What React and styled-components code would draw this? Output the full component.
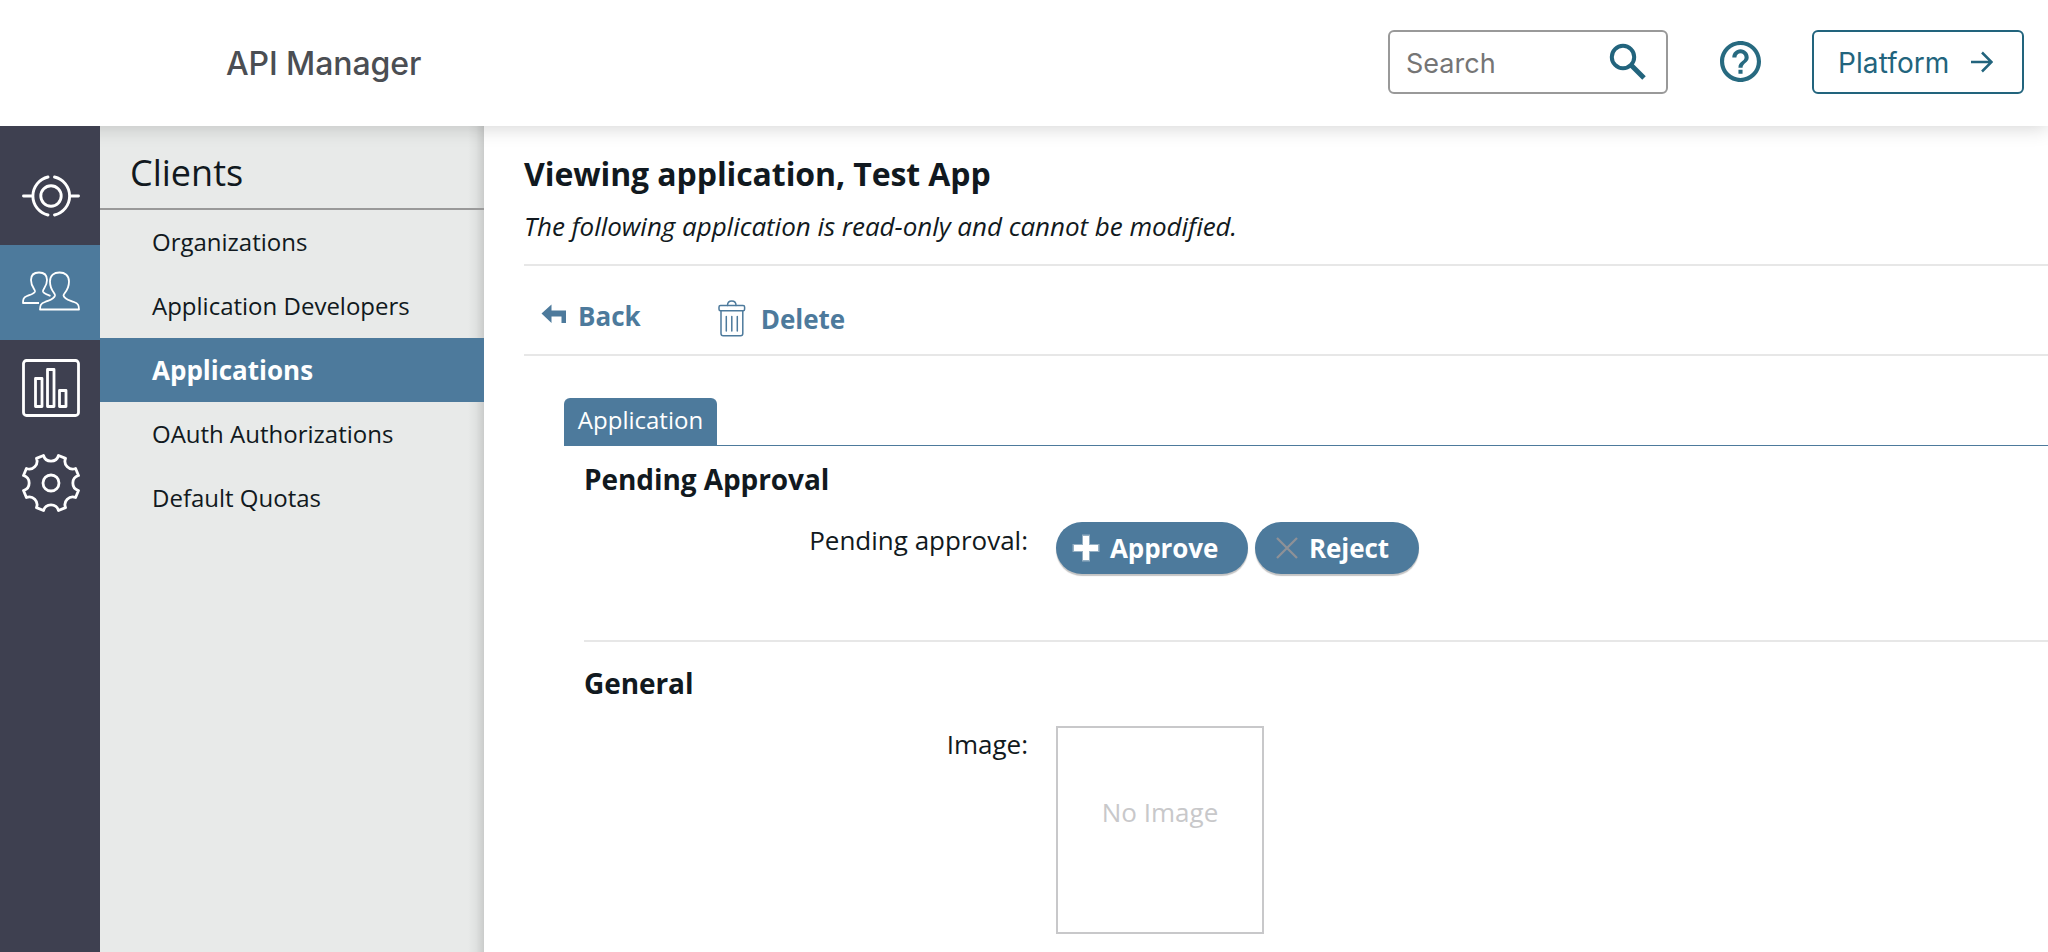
import React from 'react';
import styled, { createGlobalStyle } from 'styled-components';

const GlobalStyle = createGlobalStyle`
  * { box-sizing: border-box; }
  body {
    margin: 0;
    overflow: hidden;
    background: #fff;
    color: #111920;
    font-family: 'Open Sans', 'Noto Sans', sans-serif;
    font-size: 26px;
  }
`;

const Page = styled.div`
  display: flex;
  flex-direction: column;
  width: 100%;
  height: 952px;
  overflow: hidden;
`;

const Header = styled.header`
  position: relative;
  z-index: 1;
  flex: none;
  display: flex;
  align-items: center;
  height: 126px;
  padding: 0 24px 2px 226px;
  background: #fff;
  box-shadow: 0 0 20px rgba(0, 0, 0, 0.2);
  font-family: Inter, sans-serif;
`;

const Product = styled.div`
  flex: 1;
  padding-top: 2px;
  color: #4b4e53;
  font-size: 32px;
  font-weight: 500;
  letter-spacing: -0.1px;
`;

const SearchBox = styled.div`
  display: flex;
  align-items: center;
  justify-content: space-between;
  width: 280px;
  height: 64px;
  padding: 0 19px 0 16px;
  border: 2px solid #999;
  border-radius: 6px;
  color: #757575;
  font-size: 27px;
`;

const HelpButton = styled.div`
  display: flex;
  margin: 0 51px 2px 52px;
`;

const PlatformButton = styled.div`
  display: flex;
  align-items: center;
  gap: 21px;
  width: 212px;
  height: 64px;
  padding-left: 24px;
  border: 2px solid #22647d;
  border-radius: 6px;
  color: #22647d;
  font-size: 28px;
  letter-spacing: 0.1px;
`;

const ButtonText = styled.span`
  padding-top: 2px;
`;

const Body = styled.div`
  flex: 1;
  display: flex;
  min-height: 0;
`;

const Rail = styled.nav`
  position: relative;
  z-index: 2;
  flex: none;
  width: 100px;
  padding-top: 24px;
  background: #3e4050;
`;

const RailItem = styled.div`
  display: flex;
  align-items: center;
  justify-content: center;
  height: 95px;
  padding: 0 0 ${(p) => p.$lift || 0}px 2px;
  background: ${(p) => (p.$active ? '#4d7a9c' : 'transparent')};
`;

const Sidebar = styled.aside`
  flex: none;
  width: 384px;
  background: linear-gradient(to left, rgba(0, 0, 0, 0.13), rgba(0, 0, 0, 0.04) 8px, rgba(0, 0, 0, 0) 16px), #e8eae9;
`;

const SidebarTitle = styled.div`
  height: 84px;
  padding: 22px 0 0 30px;
  border-bottom: 2px solid #999;
  font-size: 36px;
  line-height: 50px;
`;

const SidebarItem = styled.div`
  height: 64px;
  padding-left: 52px;
  background: ${(p) => (p.$active ? '#4d7a9c' : 'transparent')};
  color: ${(p) => (p.$active ? '#fff' : 'inherit')};
  font-size: ${(p) => (p.$active ? 26 : 24)}px;
  font-weight: ${(p) => (p.$active ? 700 : 400)};
  line-height: ${(p) => (p.$active ? 65 : 63)}px;
`;

const Main = styled.main`
  flex: 1;
  min-width: 0;
  padding: 25px 0 0 40px;
`;

const Title = styled.h1`
  margin: 0;
  font-size: 32px;
  font-weight: 700;
  letter-spacing: -0.09px;
  line-height: 46px;
`;

const Note = styled.p`
  margin: 11px 0 0;
  height: 56px;
  font-size: 26px;
  font-style: italic;
  letter-spacing: -0.04px;
  line-height: 36px;
`;

const Toolbar = styled.div`
  display: flex;
  height: 92px;
  padding: 0 0 0 17px;
  border-top: 2px solid #e7e7e7;
  border-bottom: 2px solid #e7e7e7;
  color: #4d7a9c;
  font-weight: 700;
  line-height: 36px;
`;

const ToolbarAction = styled.div`
  display: flex;
  align-items: flex-start;
  padding-top: ${(p) => p.$top}px;
  margin-right: 77px;
`;

const ToolbarIcon = styled.span`
  display: flex;
  padding-top: ${(p) => p.$top}px;
`;

const ToolbarLabel = styled.span`
  margin-left: ${(p) => p.$gap}px;
  padding-top: ${(p) => p.$drop || 0}px;
`;

const TabBar = styled.div`
  display: flex;
  height: 48px;
  margin: 42px 0 0 40px;
  border-bottom: 1px solid #4d7a9c;
`;

const Tab = styled.div`
  width: 153px;
  height: 48px;
  border-radius: 6px 6px 0 0;
  background: #4d7a9c;
  color: #fff;
  font-size: 24px;
  line-height: 44px;
  text-align: center;
`;

const Section = styled.section`
  height: ${(p) => p.$height}px;
  margin-left: 60px;
  border-bottom: 2px solid #e7e7e7;
`;

const SectionTitle = styled.h2`
  margin: 0;
  padding-top: ${(p) => p.$top}px;
  font-size: 28px;
  font-weight: 700;
  letter-spacing: -0.08px;
  line-height: 38px;
`;

const Field = styled.div`
  display: flex;
  margin-top: 24px;
`;

const FieldLabel = styled.div`
  width: 444px;
  margin-right: 28px;
  line-height: 36px;
  text-align: right;
`;

const PillButton = styled.div`
  display: flex;
  align-items: center;
  width: ${(p) => p.$width}px;
  height: 52px;
  margin-right: 7px;
  padding-left: ${(p) => p.$inset}px;
  gap: ${(p) => p.$gap}px;
  border-radius: 26px;
  background: #4d7a9c;
  box-shadow: 0 2px 1px #c4c4c4;
  color: #fff;
  font-weight: 700;
  letter-spacing: -0.1px;
`;

const ImageBox = styled.div`
  width: 208px;
  height: 208px;
  padding-top: 66px;
  border: 2px solid #c8c8ca;
  color: #c8c8ca;
  line-height: 36px;
  text-align: center;
`;

const SearchIcon = () => (
  <svg width="38" height="38" viewBox="0 0 38 38" fill="none" stroke="#22647d">
    <circle cx="14" cy="14" r="11.2" strokeWidth="4" />
    <path d="M22 22 L35 35" strokeWidth="5" />
  </svg>
);

const HelpIcon = () => (
  <svg width="41" height="41" viewBox="2 2 20 20" fill="#276a80">
    <path d="M11 18h2v-2h-2v2zm1-16C6.480 2 2 6.480 2 12s4.480 10 10 10 10-4.480 10-10S17.520 2 12 2zm0 18c-4.410 0-8-3.590-8-8s3.590-8 8-8 8 3.590 8 8-3.590 8-8 8zm0-14c-2.210 0-4 1.790-4 4h2c0-1.100.9-2 2-2s2 .9 2 2c0 2-3 1.750-3 5h2c0-2.250 3-2.500 3-5 0-2.210-1.790-4-4-4z" />
  </svg>
);

const ArrowIcon = () => (
  <svg width="22" height="22" viewBox="0 0 22 22" fill="none" stroke="#22647d" strokeWidth="2.500">
    <path d="M0 11 H20.500 M11 1.500 L20.500 11 L11 20.500" />
  </svg>
);

const TargetIcon = () => (
  <svg width="58" height="42" viewBox="0 0 58 42" fill="none" stroke="#fff" strokeWidth="2.900" strokeLinecap="round">
    <circle cx="29" cy="21" r="10.200" />
    <path d="M26 2 A19.500 19.500 0 0 0 26 40 M32.500 2 A19.500 19.500 0 0 1 32.500 40 M1.500 21 H9 M49.500 21 H56.500" />
  </svg>
);

const UsersIcon = () => (
  <svg width="58" height="40" viewBox="0 0 58 40" fill="none" stroke="#fff" strokeWidth="1.800" strokeLinejoin="round">
    <path d="M17 32 H1 C1 28 1.500 26.500 5 25 C9 23.500 12 23 13 20.500 C13.500 18.500 9 16 9 9 C9 4 12 1.500 17 1.500 C22 1.500 25 4 25 9 C25 16 20.500 18 21 20.500 C22 23 25 23.500 28.500 24.800" />
    <path d="M18 38.500 H57 C57 34 56 32.500 52 31 C47 29 42.500 28.500 41.500 24.500 C41 22.500 47 20 47 10.500 C47 4.500 43 1.500 37.500 1.500 C32 1.500 28 4.500 28 10.500 C28 20 33.500 22 33 24.500 C32 28.500 28 29 23 31 C19 32.500 18 34 18 38.500 Z" />
  </svg>
);

const ChartIcon = () => (
  <svg width="58" height="58" viewBox="0 0 58 58" fill="none" stroke="#fff" strokeWidth="2.800" strokeLinejoin="round">
    <rect x="1.500" y="1.500" width="55" height="55" rx="3" />
    <path d="M13.500 19.500 H20 V47.500 H13.500 Z M25.500 10.500 H32 V47.500 H25.500 Z M37.500 31.500 H44 V47.500 H37.500 Z" />
  </svg>
);

const GearIcon = () => (
  <svg width="58" height="58" viewBox="-29 -29 58 58" fill="none" stroke="#fff" strokeWidth="2.800" strokeLinejoin="round">
    <circle r="8" />
    <path d="M-7.500 -27.500 A7.800 7.800 0 0 0 7.500 -27.500 L14.500 -24.600 A7.800 7.800 0 0 0 24.600 -14.500 L27.500 -7.500 A7.800 7.800 0 0 0 27.500 7.500 L24.600 14.500 A7.800 7.800 0 0 0 14.500 24.600 L7.500 27.500 A7.800 7.800 0 0 0 -7.500 27.500 L-14.500 24.600 A7.800 7.800 0 0 0 -24.600 14.500 L-27.500 7.500 A7.800 7.800 0 0 0 -27.500 -7.500 L-24.600 -14.500 A7.800 7.800 0 0 0 -14.500 -24.600 Z" />
  </svg>
);

const BackIcon = () => (
  <svg width="26" height="20" viewBox="0 0 26 20" fill="#4d7a9c">
    <path d="M0.500 9.500 L10.500 0.500 V6.500 H25 V19 H20.500 V12.500 H10.500 V19 Z" />
  </svg>
);

const TrashIcon = () => (
  <svg width="28" height="37" viewBox="0 0 28 37" fill="none" stroke="#4d7a9c" strokeWidth="1.500" strokeLinecap="round">
    <rect x="1" y="5.500" width="25.600" height="5.200" rx="1.500" />
    <path d="M9.500 5.500 C9.500 -0.500 18 -0.500 18 5.500 M3 11 V33.500 Q3 35.800 5.300 35.800 H22.500 Q24.800 35.800 24.800 33.500 V11 M8.300 16.500 V31 M13.800 16.500 V31 M19.300 16.500 V31" />
  </svg>
);

const PlusIcon = () => (
  <svg width="28" height="28" viewBox="0 0 28 28" fill="#fff">
    <path d="M10 0.500 H18 V10 H27.500 V18 H18 V27.500 H10 V18 H0.500 V10 H10 Z" opacity="0.400" />
    <path d="M11 2 H17 V11 H26 V17 H17 V26 H11 V17 H2 V11 H11 Z" />
  </svg>
);

const CrossIcon = () => (
  <svg width="22" height="22" viewBox="0 0 22 22" stroke="#8e9197" strokeWidth="2.300">
    <path d="M1 1 L21 21 M21 1 L1 21" />
  </svg>
);

const MENU = ['Organizations', 'Application Developers', 'Applications', 'OAuth Authorizations', 'Default Quotas'];

export default function App() {
  return (
    <Page>
      <GlobalStyle />
      <Header>
        <Product>API Manager</Product>
        <SearchBox>
          <ButtonText>Search</ButtonText>
          <SearchIcon />
        </SearchBox>
        <HelpButton>
          <HelpIcon />
        </HelpButton>
        <PlatformButton>
          <ButtonText>Platform</ButtonText>
          <ArrowIcon />
        </PlatformButton>
      </Header>
      <Body>
        <Rail>
          <RailItem $lift={3}>
            <TargetIcon />
          </RailItem>
          <RailItem $active $lift={3}>
            <UsersIcon />
          </RailItem>
          <RailItem>
            <ChartIcon />
          </RailItem>
          <RailItem>
            <GearIcon />
          </RailItem>
        </Rail>
        <Sidebar>
          <SidebarTitle>Clients</SidebarTitle>
          {MENU.map((name) => (
            <SidebarItem key={name} $active={name === 'Applications'}>
              {name}
            </SidebarItem>
          ))}
        </Sidebar>
        <Main>
          <Title>Viewing application, Test App</Title>
          <Note>The following application is read-only and cannot be modified.</Note>
          <Toolbar>
            <ToolbarAction $top={32}>
              <ToolbarIcon $top={6}>
                <BackIcon />
              </ToolbarIcon>
              <ToolbarLabel $gap={11}>Back</ToolbarLabel>
            </ToolbarAction>
            <ToolbarAction $top={34}>
              <TrashIcon />
              <ToolbarLabel $gap={15} $drop={1}>
                Delete
              </ToolbarLabel>
            </ToolbarAction>
          </Toolbar>
          <TabBar>
            <Tab>Application</Tab>
          </TabBar>
          <Section $height={196}>
            <SectionTitle $top={14}>Pending Approval</SectionTitle>
            <Field>
              <FieldLabel>Pending approval:</FieldLabel>
              <PillButton $width={192} $inset={16} $gap={10}>
                <PlusIcon />
                Approve
              </PillButton>
              <PillButton $width={164} $inset={21} $gap={11}>
                <CrossIcon />
                Reject
              </PillButton>
            </Field>
          </Section>
          <Section $height={400}>
            <SectionTitle $top={22}>General</SectionTitle>
            <Field>
              <FieldLabel>Image:</FieldLabel>
              <ImageBox>No Image</ImageBox>
            </Field>
          </Section>
        </Main>
      </Body>
    </Page>
  );
}
